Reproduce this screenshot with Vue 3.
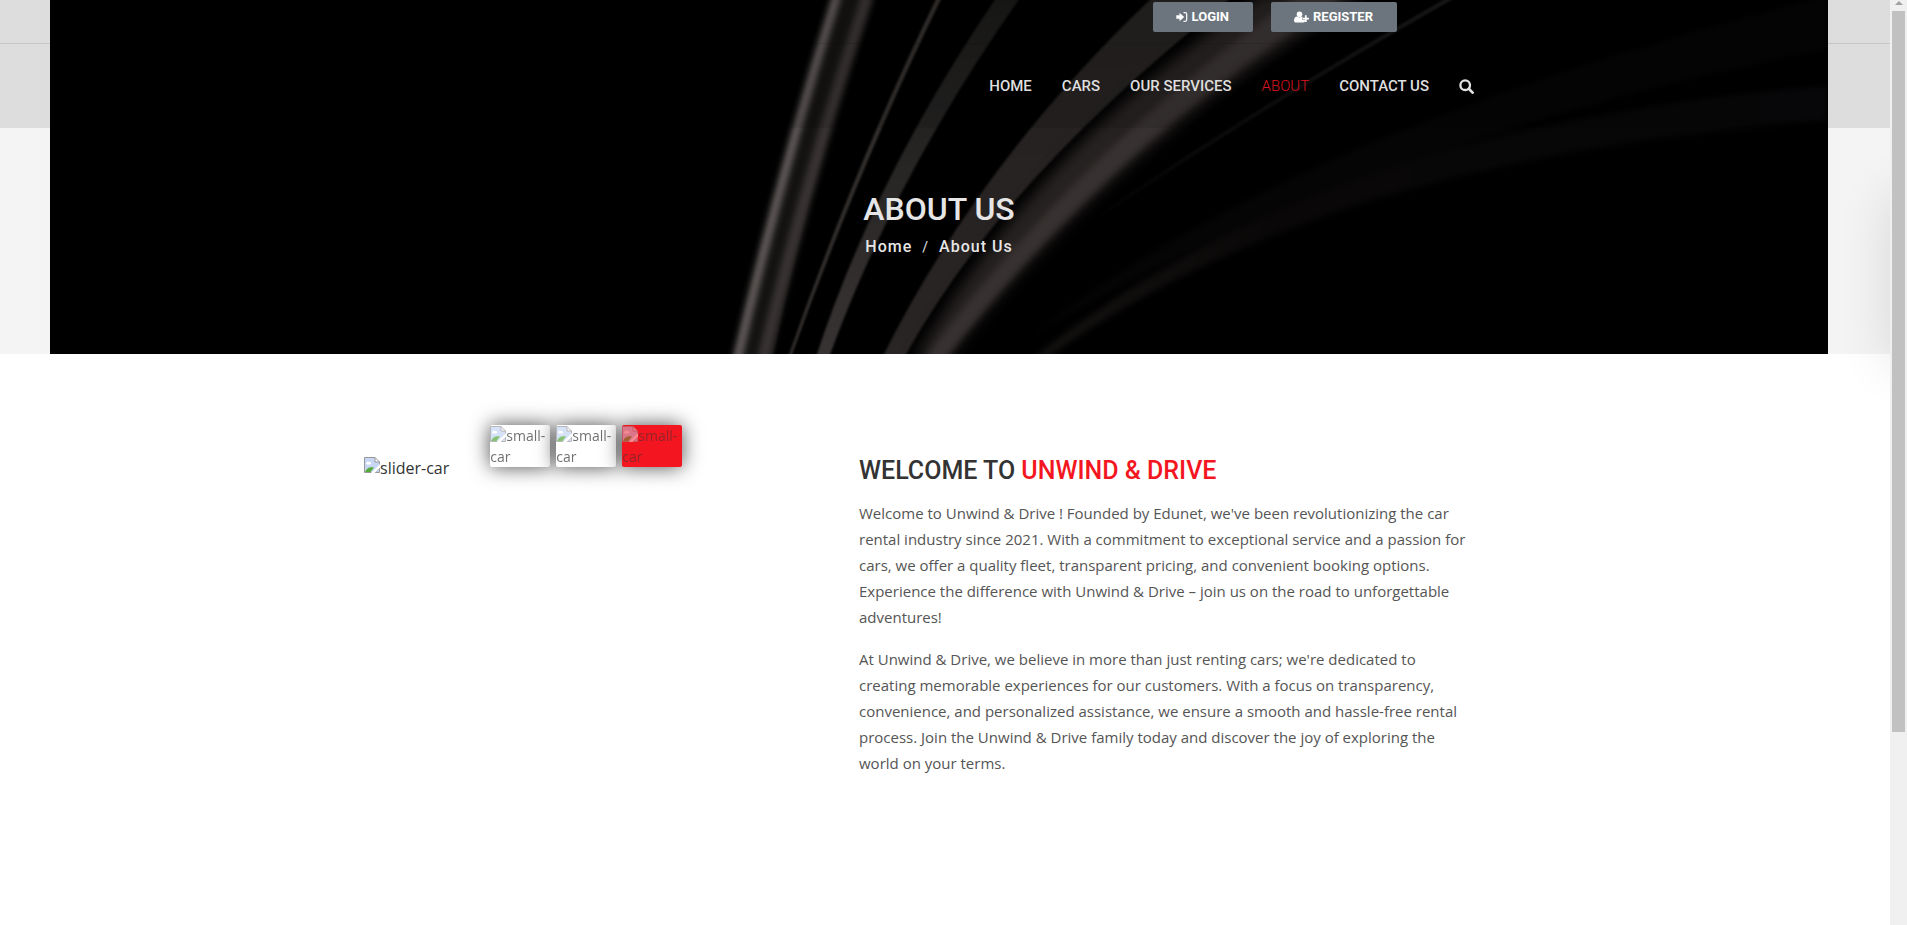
<script setup>
const navItems = [
  { label: 'Home' },
  { label: 'Cars' },
  { label: 'Our Services' },
  { label: 'About', active: true },
  { label: 'Contact Us' }
]

const thumbs = [{ id: 1 }, { id: 2 }, { id: 3, active: true }]

const paragraphs = [
  "Welcome to Unwind & Drive ! Founded by Edunet, we've been revolutionizing the car rental industry since 2021. With a commitment to exceptional service and a passion for cars, we offer a quality fleet, transparent pricing, and convenient booking options. Experience the difference with Unwind & Drive – join us on the road to unforgettable adventures!",
  "At Unwind & Drive, we believe in more than just renting cars; we're dedicated to creating memorable experiences for our customers. With a focus on transparency, convenience, and personalized assistance, we ensure a smooth and hassle-free rental process. Join the Unwind & Drive family today and discover the joy of exploring the world on your terms."
]
</script>

<template>
  <div class="window">
    <svg class="defs" aria-hidden="true">
      <symbol id="missing-image" viewBox="0 0 16 16">
        <path d="M.5.5H11L15.500 5V9L9 15.500H.5z" fill="#c6d6f4" />
        <path d="M3 7.500c-1 0-1.500-1-.5-1.700.2-1.300 1.600-1.800 2.500-.8 1.500-.3 2 .5 1.800 1 .9.500.4 1.500-.4 1.500z" fill="#fff" />
        <path d="M1 15c1.500-4 4.500-5.500 9-4.500L6.500 15z" fill="#55ab3a" />
        <path d="M11 .5V5h4.500z" fill="#fff" />
        <path d="M7.500 15.500H.5V.5H11L15.500 5v3M11 .5V5h4.500" fill="none" stroke="#9a9a9a" />
        <path d="M11 15.500h4.500V11z" fill="#c6d6f4" stroke="#9a9a9a" />
        <path d="M7 16 16 7v3.500L10.500 16z" fill="#fff" />
      </symbol>
    </svg>

    <div class="page">
      <header class="site-header">
        <div class="topbar">
          <div class="container account">
            <button type="button" class="btn">
              <svg viewBox="0 0 12 12" class="btn-icon" aria-hidden="true">
                <path d="M.3 4.200h3.200V1.700L8.200 6l-4.700 4.300V7.800H.3z" fill="currentColor" />
                <path d="M7.500 1.700h1.700q1.500 0 1.500 1.500v5.600q0 1.500-1.500 1.500H7.500" fill="none" stroke="currentColor" stroke-width="1.200" />
              </svg>
              Login
            </button>
            <button type="button" class="btn">
              <svg viewBox="0 0 15 12" class="btn-icon wide" aria-hidden="true">
                <circle cx="5.500" cy="3.300" r="2.800" fill="currentColor" />
                <path d="M3 5.600q-3 .2-3 4.200 0 1.700 1.600 1.700h7.800q1.200 0 1.500-1V9H8.300V6.600h.5Q8.400 5.700 8 5.600 5.500 7.200 3 5.600z" fill="currentColor" />
                <path d="M11.800 4.300v6.800M8.600 7.700H15" fill="none" stroke="currentColor" stroke-width="1.800" />
              </svg>
              Register
            </button>
          </div>
        </div>
        <nav class="container nav">
          <a v-for="item in navItems" :key="item.label" href="#" :class="{ active: item.active }">{{ item.label }}</a>
          <button type="button" class="search" aria-label="Search">
            <svg viewBox="0 0 15 15" aria-hidden="true">
              <circle cx="6.200" cy="6.200" r="4.800" fill="none" stroke="currentColor" stroke-width="2.300" />
              <path d="m9.800 9.800 3.800 3.800" fill="none" stroke="currentColor" stroke-width="2.700" stroke-linecap="round" />
            </svg>
          </button>
        </nav>
      </header>

      <div class="drawer-shadow"><div class="drawer"></div></div>

      <section class="hero">
        <div class="banner">
          <svg class="art" viewBox="50 0 1778 354" preserveAspectRatio="xMidYMid slice" aria-hidden="true">
            <defs>
              <filter id="soft1" x="-10%" y="-10%" width="120%" height="120%" color-interpolation-filters="sRGB"><feGaussianBlur stdDeviation="1" /></filter>
              <filter id="soft2" x="-10%" y="-10%" width="120%" height="120%" color-interpolation-filters="sRGB"><feGaussianBlur stdDeviation="3" /></filter>
              <filter id="soft3" x="-10%" y="-10%" width="120%" height="120%" color-interpolation-filters="sRGB"><feGaussianBlur stdDeviation="7" /></filter>
              <linearGradient id="ribbon" x1="0" y1="0" x2="0" y2="1">
                <stop offset="0" stop-color="#242120" />
                <stop offset="1" stop-color="#292524" />
              </linearGradient>
              <linearGradient id="strip" x1="0" y1="0" x2="0" y2="1">
                <stop offset="0" stop-color="#191918" />
                <stop offset="1" stop-color="#383433" />
              </linearGradient>
              <linearGradient id="hairline" x1="1" y1="0" x2="0" y2="1">
                <stop offset="0" stop-color="#1c1b1b" />
                <stop offset="1" stop-color="#000" />
              </linearGradient>
              <linearGradient id="sheen" x1="0" y1="0" x2="1" y2="0">
                <stop offset="0" stop-color="#161312" />
                <stop offset=".3" stop-color="#090707" />
                <stop offset="1" stop-color="#080709" />
              </linearGradient>
            </defs>
            <g filter="url(#soft1)">
              <path d="M834-5Q776 180 733 360H772Q810 180 868-5z" fill="#141312" />
              <path d="M943-5H938Q855 165 787 360H790Q860 165 943-5z" fill="#33302e" />
              <path d="M998-5H1022Q895 175 828 360H815Q875 175 998-5z" fill="url(#strip)" />
              <path d="M1155-5H1235Q1000 180 903 360H881Q980 160 1155-5z" fill="url(#ribbon)" />
              <path d="M1456-5Q1240 118 1075 233" fill="none" stroke="url(#hairline)" stroke-width="4" />
            </g>
            <g fill="none" filter="url(#soft2)">
              <path d="M837-5Q779 180 737 360" stroke="#625c5b" stroke-width="9" />
              <path d="M868-5Q806 180 763 360" stroke="#393433" stroke-width="12" />
            </g>
            <g filter="url(#soft3)">
              <path d="M1262-5H1366Q1124 135 946 360H914Q1044 140 1262-5z" fill="#262221" />
            </g>
            <g filter="url(#soft2)">
              <path d="M1298-5H1346Q1108 145 944 360H924Q1078 150 1298-5z" fill="#373231" />
              <path d="M1828 50Q1350 145 1029 337 1290 130 1828-5z" fill="#060506" />
              <path d="M1828 121Q1330 155 1046 358H1034Q1320 125 1828 85z" fill="url(#sheen)" />
            </g>
          </svg>
          <div class="banner-text">
            <h1>About Us</h1>
            <div class="crumbs"><a href="#">Home</a><span class="slash">/</span><span>About Us</span></div>
          </div>
        </div>
      </section>

      <main class="container about">
        <div class="gallery">
          <div class="slide"><svg class="missing"><use href="#missing-image" /></svg>slider-car</div>
          <div class="thumbs">
            <button v-for="t in thumbs" :key="t.id" type="button" class="thumb" :class="{ selected: t.active }">
              <span class="thumb-alt"><svg class="missing"><use href="#missing-image" /></svg>small-car</span>
            </button>
          </div>
        </div>
        <article class="copy">
          <h2>Welcome to <span>Unwind &amp; Drive</span></h2>
          <p v-for="(text, i) in paragraphs" :key="i">{{ text }}</p>
        </article>
      </main>
    </div>

    <div class="scrollbar" aria-hidden="true">
      <div class="arrow"></div>
      <div class="thumb-bar"></div>
    </div>
  </div>
</template>

<style>
body {
  margin: 0;
  background: #fff;
}
</style>

<style scoped>
* {
  box-sizing: border-box;
}

.window {
  display: flex;
  min-height: 100vh;
  font-family: "Open Sans", "Noto Sans", sans-serif;
  color: #333;
}

.defs {
  position: absolute;
  width: 0;
  height: 0;
}

.page {
  position: relative;
  flex: 1;
  min-width: 0;
}

.container {
  width: 100%;
  max-width: 1170px;
  margin: 0 auto;
}

.site-header {
  position: absolute;
  z-index: 3;
  top: 0;
  left: 0;
  right: 0;
  background: rgba(0, 0, 0, 0.094);
  font-family: Roboto, sans-serif;
}

.topbar {
  height: 44px;
  border-bottom: 1px solid rgba(0, 0, 0, 0.1);
}

.account {
  display: flex;
  justify-content: flex-end;
  gap: 18px;
  padding: 2px 133px 0 0;
}

.btn {
  display: flex;
  align-items: center;
  gap: 4px;
  height: 30px;
  padding: 0 24px 0 23px;
  border: 0;
  border-radius: 2px;
  background: #6c757d;
  color: #fff;
  font: 700 13px/18px Roboto, sans-serif;
  text-transform: uppercase;
}

.btn-icon {
  width: 12px;
  height: 12px;
}

.btn-icon.wide {
  width: 15px;
}

.nav {
  display: flex;
  align-items: center;
  justify-content: flex-end;
  gap: 30px;
  height: 84px;
  padding-right: 56px;
}

.nav a {
  color: #dfdfdf;
  font-size: 15px;
  font-weight: 500;
  line-height: 24px;
  text-decoration: none;
  text-transform: uppercase;
}

.nav a.active {
  color: #dc141e;
  font-weight: 300;
}

.search {
  display: flex;
  padding: 0;
  border: 0;
  background: none;
  color: #e2e2e2;
}

.search svg {
  width: 15px;
  height: 15px;
}

.hero {
  padding: 0 62px 0 50px;
  background: #f4f4f4;
}

.banner {
  position: relative;
  display: flex;
  justify-content: center;
  min-height: 354px;
  padding-top: 189px;
  background: #000;
}

.art {
  position: absolute;
  inset: 0;
  width: 100%;
  height: 100%;
}

.banner-text {
  position: relative;
  color: #e6e6e6;
  font-family: Roboto, sans-serif;
  text-align: center;
}

.banner-text h1 {
  margin: 0;
  font-size: 32px;
  font-weight: 500;
  line-height: 40px;
  text-transform: uppercase;
}

.crumbs {
  display: flex;
  justify-content: center;
  gap: 10px;
  margin-top: 6px;
  font-size: 16px;
  font-weight: 500;
  line-height: 24px;
  letter-spacing: 1px;
}

.crumbs a {
  color: inherit;
  text-decoration: none;
}

.slash {
  font-size: 14px;
  font-weight: 400;
}

.drawer-shadow {
  position: absolute;
  z-index: 2;
  top: 128px;
  right: 0;
  width: 62px;
  height: 320px;
  overflow: hidden;
  pointer-events: none;
}

.drawer {
  width: 200px;
  height: 170px;
  margin: 66px 0 0 62px;
  box-shadow: 0 0 50px rgba(0, 0, 0, 0.12);
}

.about {
  display: grid;
  grid-template-columns: 1fr 611px;
  gap: 30px;
  padding: 71px 60px 60px 4px;
}

.gallery {
  display: flex;
  align-items: flex-start;
  gap: 41px;
}

.missing {
  width: 16px;
  height: 16px;
}

.slide {
  padding-top: 31px;
  font-size: 16px;
  line-height: 24px;
  white-space: nowrap;
}

.slide .missing {
  vertical-align: 1px;
}

.thumbs {
  display: flex;
  gap: 6px;
}

.thumb {
  width: 60px;
  height: 42px;
  padding: 0;
  overflow: visible;
  border: 0;
  border-radius: 2px;
  background: #fff;
  box-shadow: 0 0 20px rgba(0, 0, 0, 0.7);
  color: #333;
  font: 400 14px/21px "Open Sans", sans-serif;
  text-align: left;
}

.thumb-alt {
  display: block;
  opacity: 0.7;
}

.thumb .missing {
  vertical-align: -1px;
}

.thumb.selected {
  background: #f31621;
}

.thumb.selected .thumb-alt {
  opacity: 0.5;
}

.copy {
  padding-top: 30px;
}

.copy h2 {
  margin: 0 0 13px;
  color: #333;
  font: 500 25px/32px Roboto, sans-serif;
  text-transform: uppercase;
}

.copy h2 span {
  color: #f31621;
}

.copy p {
  margin: 0 0 16px;
  color: #555;
  font-size: 15px;
  line-height: 26px;
}

.scrollbar {
  position: sticky;
  top: 0;
  width: 17px;
  height: 100vh;
  padding: 1px 2px 0;
  background: #f0f0f0;
}

.arrow {
  height: 4px;
  width: 0;
  margin: 0 auto 6px;
  border: solid transparent;
  border-width: 0 4px 4px;
  border-bottom-color: #a0a0a0;
}

.thumb-bar {
  height: 78%;
  background: #c1c1c1;
}
</style>
